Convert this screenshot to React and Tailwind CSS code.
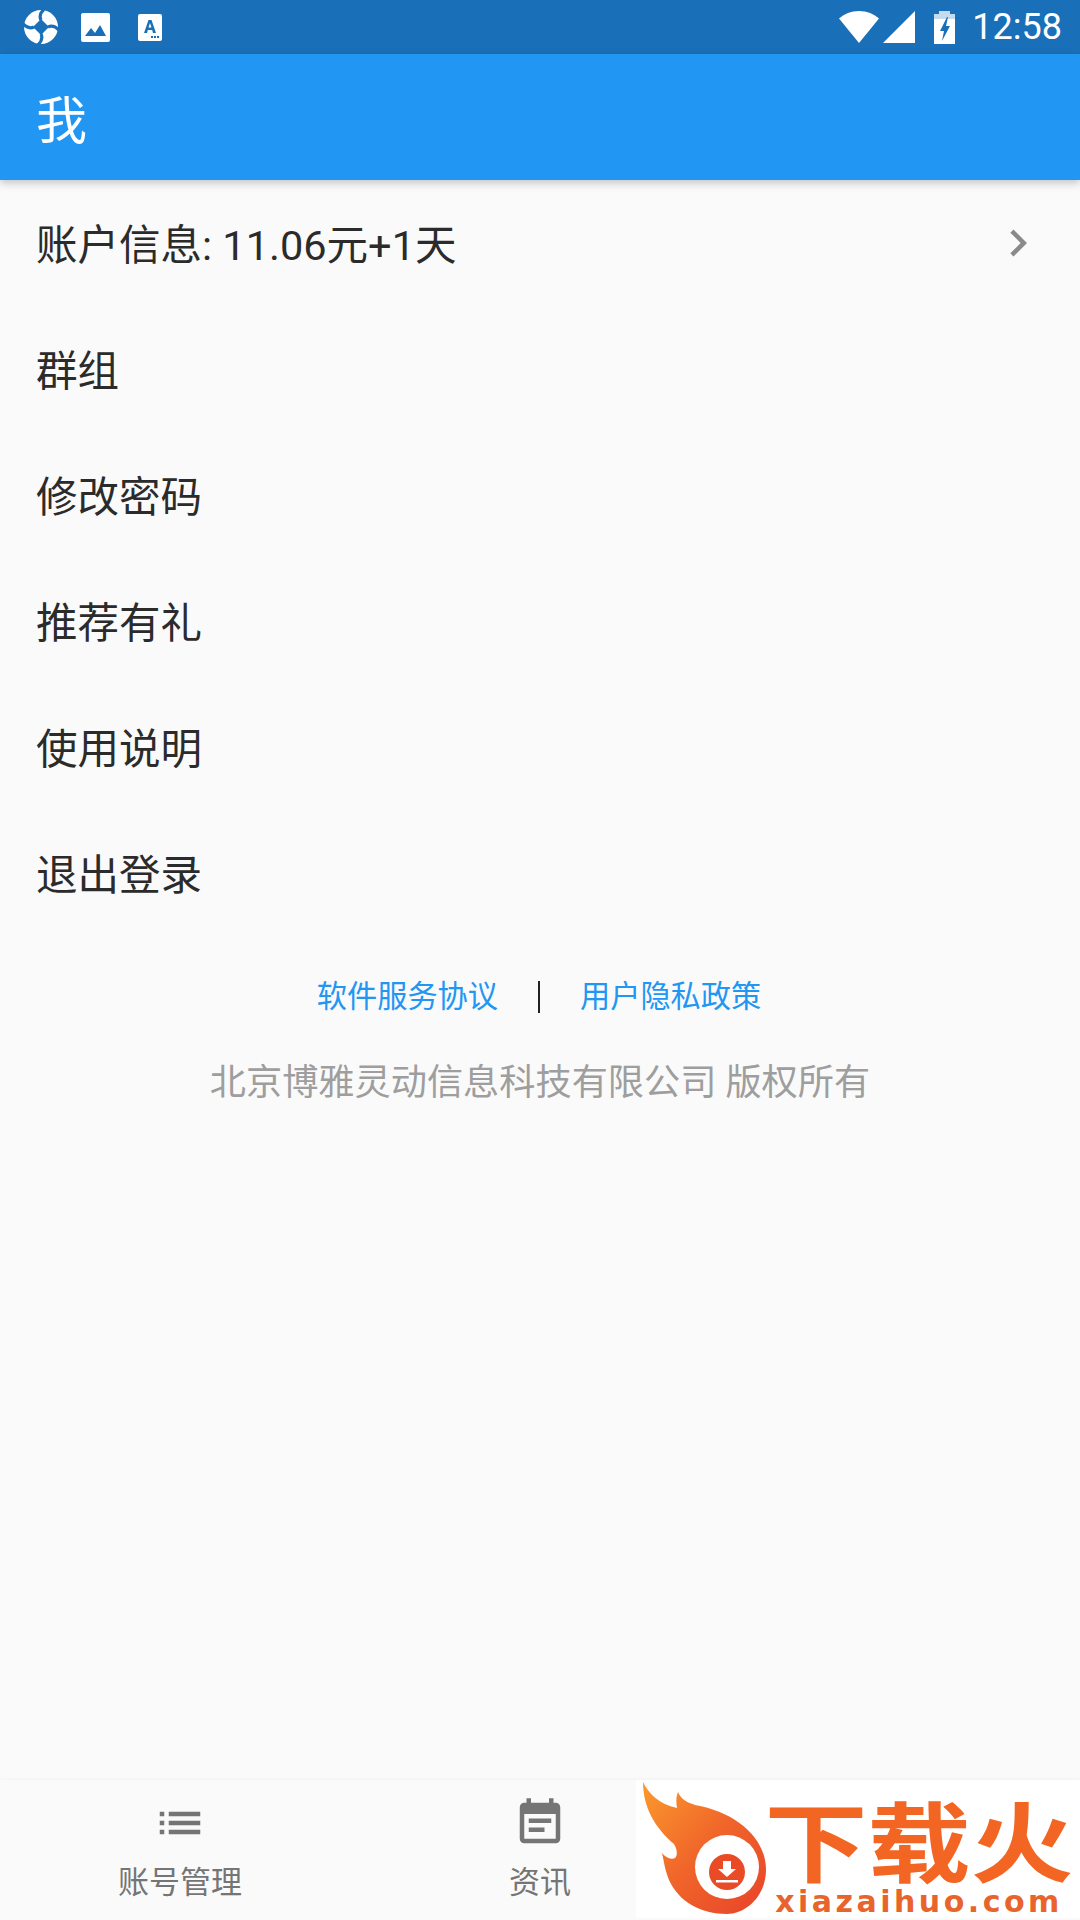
const menuItems = ['账户信息: 11.06元+1天', '群组', '修改密码', '推荐有礼', '使用说明', '退出登录'];

const SWIRL = 'M20 -1C16 3 15 6 17 10';

const StatusBar = () => (
  <div className="h-[54px] bg-[#1a70b8] flex items-center shrink-0 text-white">
    {/* notification icons */}
    <svg className="ml-[24px] w-[34px] h-[36px]" viewBox="0 0 34 34">
      <circle cx="17" cy="17" r="17" fill="#fff" />
      <path d="M17 9L25 17L17 25L9 17Z" fill="#1a70b8" />
      <g fill="none" stroke="#1a70b8" strokeWidth="3.2">
        <path d={SWIRL} />
        <path d={SWIRL} transform="rotate(90 17 17)" />
        <path d={SWIRL} transform="rotate(180 17 17)" />
        <path d={SWIRL} transform="rotate(270 17 17)" />
      </g>
    </svg>
    <svg className="ml-[23px] w-[29px] h-[29px]" viewBox="0 0 29 29">
      <rect width="29" height="29" rx="2" fill="#fff" />
      <path d="M4 23l6-8 4 5 5-8 6 11z" fill="#1a70b8" />
    </svg>
    <svg className="ml-[28px] w-[24px] h-[27px]" viewBox="0 0 24 27">
      <rect width="24" height="27" rx="2" fill="#fff" />
      <path d="M6 19L10.500 6h3L18 19h-3l-.8-3h-4.400l-.8 3zM10.500 13.500h3L12 9z" fill="#1a70b8" />
      <path d="M13 22h2v2h-2zM16 22h2v2h-2zM19 22h2v2h-2z" fill="#1a70b8" />
    </svg>

    <div className="ml-auto flex items-center">
      {/* wifi */}
      <svg className="w-[40px] h-[32px]" viewBox="0 0 40 32">
        <path d="M0 7.500C5 3 12 0 20 0s15 3 20 7.500L20 32z" fill="#fff" />
      </svg>
      {/* signal */}
      <svg className="ml-[4px] w-[32px] h-[32px]" viewBox="0 0 32 32">
        <path d="M32 0v32H0z" fill="#fff" />
      </svg>
      {/* battery */}
      <svg className="ml-[19px] w-[21px] h-[33px]" viewBox="0 0 21 33">
        <path d="M5 0h11v3h5v5H0V3h5z" fill="#fff" fillOpacity="0.75" />
        <path d="M0 8h21v25H0z" fill="#fff" />
        <path d="M13 6L6 20h4l-2 10 8-15h-4l2-9z" fill="#1a70b8" />
      </svg>
      <span className="ml-[17px] mr-[18px] text-[36px] leading-none font-['Roboto',sans-serif]">12:58</span>
    </div>
  </div>
);

const TabItem = ({ label, children }) => (
  <div className="flex-1 flex flex-col items-center pt-[16px]">
    <svg className="w-[54px] h-[54px]" viewBox="0 0 24 24" fill="#757575">
      {children}
    </svg>
    <span className="text-[31px] leading-[40px] mt-[13px] text-[#757575]">{label}</span>
  </div>
);

const DownloadLogo = () => (
  <div className="absolute right-0 top-0 w-[444px] h-[138px] bg-white flex">
    <svg className="ml-[7px] mt-[2px] w-[124px] h-[134px] shrink-0" viewBox="0 0 124 134">
      <defs>
        <linearGradient id="flame" x1="0" y1="0" x2="1" y2="1">
          <stop offset="0" stopColor="#fb9a2d" />
          <stop offset="0.5" stopColor="#f0652a" />
          <stop offset="1" stopColor="#e8432a" />
        </linearGradient>
      </defs>
      <path
        d="M0 0C6 12 16 22 34 26C33 20 33 15 35 10C38 17 43 20 52 23C92 30 123 55 123 88C123 114 103 132 84 132C58 132 36 120 26 98C22 88 21 80 19 71C23 76 29 78 32 76C35 73 34 67 31 62C12 46 0 25 0 0Z"
        fill="url(#flame)"
      />
      <circle cx="84" cy="85" r="32" fill="#fff" />
      <circle cx="84" cy="90" r="18" fill="#ea4b27" />
      <path d="M80 79h8v8h5l-9 8-9-8h5z" fill="#fff" />
      <rect x="73" y="98" width="22" height="2.500" fill="#fff" />
    </svg>
    <div className="pt-[26px] ml-[1px] w-[302px] flex flex-col items-center">
      <span className="block h-[82px] text-[103px] leading-[80px] font-bold scale-y-[0.85] text-[#f26522] whitespace-nowrap">下载火</span>
      <span className="block h-[27px] text-[30px] leading-[27px] font-bold tracking-[3.5px] text-[#e8642c] font-['DejaVu_Sans',sans-serif] whitespace-nowrap">
        xiazaihuo.com
      </span>
    </div>
  </div>
);

export default function App() {
  return (
    <div className="w-[1080px] h-[1920px] bg-[#fafafa] flex flex-col overflow-hidden font-['Roboto','Noto_Sans_CJK_SC',sans-serif]">
      <StatusBar />

      {/* App bar */}
      <div className="h-[126px] bg-[#2196f3] flex items-center px-[36px] pt-[8px] shrink-0 relative z-10 shadow-[0_3px_8px_rgba(0,0,0,0.22)]">
        <h1 className="text-[51px] leading-none text-white">我</h1>
      </div>

      {/* Menu */}
      <ul>
        {menuItems.map((item, i) => (
          <li key={item} className="h-[126px] pl-[36px] pr-[35px] flex items-center justify-between text-[41.5px] text-[#2b2b2b]">
            <span className="mt-[6px]">{item}</span>
            {i === 0 && (
              <svg className="w-[54px] h-[54px]" viewBox="0 0 24 24" fill="#8a8a8a">
                <path d="M10 6L8.590 7.410 13.170 12l-4.580 4.590L10 18l6-6z" />
              </svg>
            )}
          </li>
        ))}
      </ul>

      {/* Links */}
      <div className="mt-[41px] pr-[2px] flex items-center justify-center gap-[40px] text-[30.2px] leading-[40px] text-[#2196f3]">
        <span>软件服务协议</span>
        <span className="w-[2px] h-[32px] bg-[#212121]"></span>
        <span>用户隐私政策</span>
      </div>
      <p className="mt-[41px] text-center text-[36.2px] leading-[50px] text-[#9e9e9e]">北京博雅灵动信息科技有限公司 版权所有</p>

      {/* Bottom tabs */}
      <div className="mt-auto h-[140px] flex relative bg-[#fafafa] shadow-[0_-1px_3px_rgba(0,0,0,0.03)]">
        <TabItem label="账号管理">
          <path d="M3 13h2v-2H3v2zm0 4h2v-2H3v2zm0-8h2V7H3v2zm4 4h14v-2H7v2zm0 4h14v-2H7v2zM7 7v2h14V7H7z" />
        </TabItem>
        <TabItem label="资讯">
          <path d="M17 10H7v2h10v-2zm2-7h-1V1h-2v2H8V1H6v2H5c-1.110 0-1.990.9-1.990 2L3 19c0 1.100.89 2 2 2h14c1.100 0 2-.9 2-2V5c0-1.100-.9-2-2-2zm0 16H5V8h14v11zm-5-5H7v2h7v-2z" />
        </TabItem>
        <div className="flex-1" />
        <DownloadLogo />
      </div>
    </div>
  );
}
